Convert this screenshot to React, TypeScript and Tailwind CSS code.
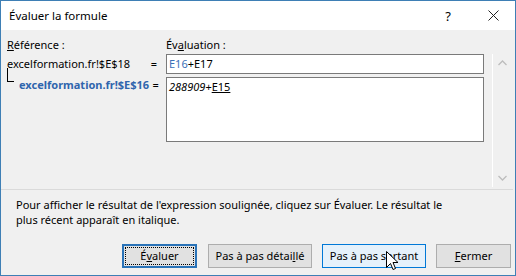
import React from 'react';

function Btn({
  children,
  width,
  variant = 'normal',
}: {
  children: React.ReactNode;
  width: string;
  variant?: 'normal' | 'default' | 'hover';
}) {
  if (variant === 'default') {
    return (
      <button className={`${width} h-[24px] border-2 border-[#2a73b8] bg-[#e1e1e1] p-[1px]`}>
        <div className="w-full h-full border border-dotted border-black flex items-center justify-center">
          {children}
        </div>
      </button>
    );
  }
  return (
    <button
      className={`${width} h-[24px] border flex items-center justify-center ${
        variant === 'hover' ? 'border-[#0078d7] bg-[#e5f1fb]' : 'border-[#adadad] bg-[#e1e1e1]'
      }`}
    >
      {children}
    </button>
  );
}

export default function App() {
  return (
    <div className="relative w-[516px] h-[276px] border border-[#3e7fb5] bg-[#f0f0f0] flex flex-col font-['Noto_Sans',sans-serif] text-[11px] leading-[16px] text-black overflow-hidden">
      {/* title bar */}
      <div className="h-[29px] bg-white flex items-center pl-[8px] pr-[14px] shrink-0 text-[11.5px]">
        <span className="flex-1">Évaluer la formule</span>
        <span className="w-[12px] text-center mr-[34px] text-[13px]">?</span>
        <svg width="11" height="11" viewBox="0 0 11 11" className="mr-[2px]">
          <path d="M0.5 0.5 L10.5 10.5 M10.5 0.5 L0.5 10.5" stroke="#222" strokeWidth="1" />
        </svg>
      </div>

      {/* formula area */}
      <div className="flex pl-[6px] pt-[7px]">
        <div className="w-[159px]">
          <div className="h-[17px]">
            <span className="underline">R</span>éférence :
          </div>
          <div className="h-[20px] flex items-center">
            <span className="flex-1 whitespace-nowrap">excelformation.fr!$E$18</span>
            <span className="w-[16px] text-center mr-[4px]">=</span>
          </div>
          <div className="mt-[3px] h-[16px] flex items-start">
            <div className="w-[7px] h-[14px] -mt-[9px] border-l border-b border-black shrink-0" />
            <span className="flex-1 ml-[5px] font-bold text-[#2f65ad] whitespace-nowrap">excelformation.fr!$E$16</span>
            <span className="w-[16px] text-center mr-[4px]">=</span>
          </div>
        </div>
        <div className="w-[318px]">
          <div className="h-[17px]">
            Év<span className="underline">a</span>luation :
          </div>
          <div className="h-[20px] border border-[#7a7a7a] bg-white flex items-center pl-[2px]">
            <span className="text-[#3a70b8]">E16</span>+E17
          </div>
          <div className="mt-[3px] h-[65px] border border-[#7a7a7a] bg-white pl-[2px] pt-[1px]">
            <span className="italic">288909</span>+<span className="underline">E15</span>
          </div>
        </div>
        <div className="ml-[8px] mt-[17px] w-[19px] h-[133px] border-l border-white flex flex-col items-center justify-between py-[6px]">
          <svg width="9" height="6" viewBox="0 0 9 6">
            <path d="M0.5 5 L4.5 1 L8.5 5" stroke="#bdbdbd" strokeWidth="1.3" fill="none" />
          </svg>
          <svg width="9" height="6" viewBox="0 0 9 6">
            <path d="M0.5 1 L4.5 5 L8.5 1" stroke="#bdbdbd" strokeWidth="1.3" fill="none" />
          </svg>
        </div>
      </div>

      {/* separator */}
      <div className="mt-[2px] mr-[2px] h-px bg-[#dadada]" />

      {/* hint */}
      <div className="pl-[15px] mt-[7px] leading-[15px] whitespace-nowrap">
        Pour afficher le résultat de l'expression soulignée, cliquez sur Évaluer. Le résultat le
        <br />
        plus récent apparaît en italique.
      </div>

      {/* buttons */}
      <div className="mt-[17px] flex justify-end pr-[4px]">
        <Btn width="w-[75px]" variant="default">
          <span>
            É<span className="underline">v</span>aluer
          </span>
        </Btn>
        <div className="ml-[11px]">
          <Btn width="w-[104px]">
            <span>
              Pas à pas détai<span className="underline">l</span>lé
            </span>
          </Btn>
        </div>
        <div className="ml-[10px]">
          <Btn width="w-[104px]" variant="hover">
            <span>Pas à pas sortant</span>
          </Btn>
        </div>
        <div className="ml-[10px]">
          <Btn width="w-[75px]">
            <span>
              <span className="underline">F</span>ermer
            </span>
          </Btn>
        </div>
      </div>

      {/* mouse cursor */}
      <svg
        width="13"
        height="20"
        viewBox="0 0 13 20"
        className="absolute left-[385px] top-[250px]"
      >
        <path
          d="M0.5 0.5 L0.5 16.5 L4.5 12.5 L7 18.5 L9.5 17.5 L7 11.5 L12 11.5 Z"
          fill="white"
          stroke="black"
          strokeWidth="1"
          strokeLinejoin="miter"
        />
      </svg>
    </div>
  );
}
